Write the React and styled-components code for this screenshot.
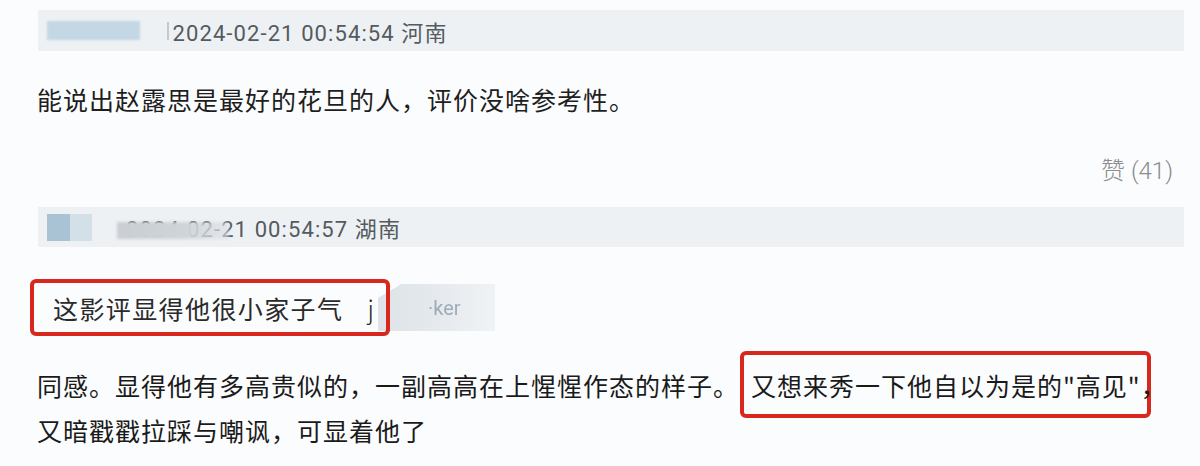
import React from "react";
import styled, { createGlobalStyle } from "styled-components";

const GlobalStyle = createGlobalStyle`
  html, body {
    margin: 0;
    padding: 0;
    background: #fbfcfd;
  }
  body {
    font-family: Roboto, "Noto Sans CJK SC", sans-serif;
  }
`;

const Page = styled.div`
  width: 1200px;
  height: 466px;
  overflow: hidden;
  box-sizing: border-box;
  padding: 10px 16px 0 36px;
  display: flex;
  flex-direction: column;
`;

// 灰色的用户信息条
const MetaBar = styled.div`
  position: relative;
  height: ${(p) => p.$h}px;
  margin-top: ${(p) => p.$top}px;
  margin-left: 2px;
  background: #eef1f4;
  display: flex;
  align-items: center;
  flex-shrink: 0;
`;

const NameBlur = styled.div`
  width: 93px;
  height: 19px;
  margin-left: 9px;
  background: #c3d7e4;
  filter: blur(1.2px);
`;

const Divider = styled.div`
  width: 1.5px;
  height: 18px;
  margin-left: 27px;
  background: #c5cacf;
`;

const AvatarTile = styled.div`
  width: ${(p) => p.$w}px;
  height: 27px;
  margin-left: ${(p) => p.$ml || 0}px;
  background: ${(p) => p.$c};
  filter: blur(0.6px);
`;

const Time = styled.span`
  margin-left: ${(p) => p.$ml}px;
  font-family: Roboto, "Noto Sans CJK SC", sans-serif;
  font-size: 22px;
  letter-spacing: 1.1px;
  color: #555a5e;
  white-space: nowrap;
`;

// 打码的名字（盖在时间上面）
const Smudge = styled.div`
  position: absolute;
  left: 79px;
  top: 15px;
  width: 112px;
  height: 17px;
  background: linear-gradient(90deg, #c9ced3 0%, #cfd4d8 60%, rgba(220, 225, 229, 0.6) 100%);
  filter: blur(1.5px);
`;

const CommentText = styled.div`
  margin-top: ${(p) => p.$top}px;
  padding-left: 1px;
  font-family: "Noto Sans CJK SC", Roboto, sans-serif;
  font-size: 25px;
  letter-spacing: 1px;
  line-height: 45px;
  color: #1e1e1e;
  white-space: nowrap;
`;

const LikeRow = styled.div`
  margin-top: 34px;
  padding-right: 11px;
  text-align: right;
  font-family: Roboto, "Noto Sans CJK SC", sans-serif;
  font-weight: 300;
  font-size: 24px;
  line-height: 30px;
  color: #8a8c8e;
`;

const QuoteRow = styled.div`
  margin-top: 32px;
  margin-left: -6px;
  height: 57px;
  display: flex;
  align-items: center;
  flex-shrink: 0;
`;

const QuoteBox = styled.div`
  position: relative;
  z-index: 1;
  width: 360px;
  height: 57px;
  box-sizing: border-box;
  border: 4px solid #d8271d;
  border-radius: 6px;
  padding-left: 19px;
  display: flex;
  align-items: center;
  font-family: "Noto Sans CJK SC", Roboto, sans-serif;
  font-size: 25px;
  letter-spacing: 1.4px;
  color: #2a2a2a;
  white-space: nowrap;
`;

const QuoteTail = styled.span`
  margin-left: 24px;
  font-family: "Noto Sans CJK SC", sans-serif;
  font-weight: 300;
`;

const BlurTag = styled.div`
  width: 117px;
  height: 47px;
  margin-left: -12px;
  background: linear-gradient(90deg, #dde3e8 0%, #e7ebef 60%, #f0f3f5 100%);
  clip-path: polygon(0 30%, 20% 0, 100% 0, 100% 100%, 0 100%);
  display: flex;
  align-items: center;
  padding-left: 50px;
  box-sizing: border-box;
  font-family: Roboto, sans-serif;
  font-size: 20px;
  color: rgba(90, 110, 130, 0.5);
  filter: blur(0.6px);
`;

const ReplyText = styled(CommentText)`
  color: #1a1a1a;
`;

const Mark = styled.span`
  border: 4px solid #d8271d;
  border-radius: 6px;
  margin-left: 1px;
  margin-right: -10px;
  padding: 12px 6px 11px 7px;
`;

const App = () => {
  return (
    <>
      <GlobalStyle />
      <Page>
        <MetaBar $h={41} $top={0}>
          <NameBlur />
          <Divider />
          <Time $ml={4}>2024-02-21 00:54:54 河南</Time>
        </MetaBar>

        <CommentText $top={26}>能说出赵露思是最好的花旦的人，评价没啥参考性。</CommentText>

        <LikeRow>赞 (41)</LikeRow>

        <MetaBar $h={40} $top={21}>
          <AvatarTile $w={23} $ml={9} $c="#a9c3d5" />
          <AvatarTile $w={22} $c="#d4e0e8" />
          <Time $ml={34}>2024-02-21 00:54:57 湖南</Time>
          <Smudge />
        </MetaBar>

        <QuoteRow>
          <QuoteBox>
            这影评显得他很小家子气
            <QuoteTail>j</QuoteTail>
          </QuoteBox>
          <BlurTag>·ker</BlurTag>
        </QuoteRow>

        <ReplyText $top={27}>
          同感。显得他有多高贵似的，一副高高在上惺惺作态的样子。
          <Mark>又想来秀一下他自以为是的"高见"</Mark>，
          <br />
          又暗戳戳拉踩与嘲讽，可显着他了
        </ReplyText>
      </Page>
    </>
  );
};

export default App;
